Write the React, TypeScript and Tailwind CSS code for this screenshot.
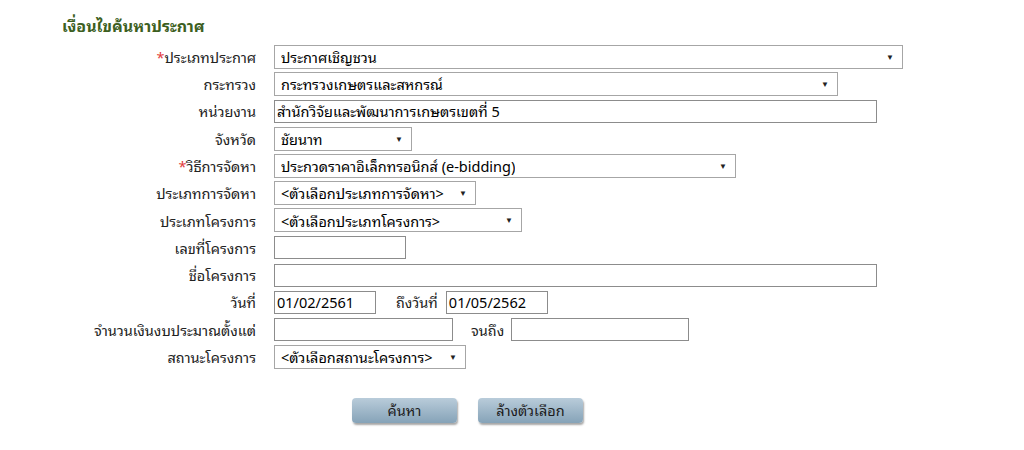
import React from 'react';

const font = {
  fontFamily: "Tahoma, 'Noto Sans Thai Looped', Loma, Garuda, 'Noto Sans Thai', 'Noto Sans', sans-serif",
};

function Select({ value, width }: { value: string; width: string }) {
  return (
    <div
      className={`${width} h-[24px] flex items-center justify-between border border-[#a6a6a6] bg-white pl-[6px] pr-[8px] text-[14.5px] text-black`}
    >
      <span className="truncate">{value}</span>
      <span className="text-[8px] leading-none text-[#222]">▼</span>
    </div>
  );
}

function TextBox({ value = '', width }: { value?: string; width: string }) {
  return (
    <div
      className={`${width} h-[23px] flex items-center border border-[#8c8c8c] bg-white px-[2px] text-[14.5px] text-black`}
    >
      {value}
    </div>
  );
}

function Label({ text, required }: { text: string; required?: boolean }) {
  return (
    <div className="text-right text-[14.5px] text-[#222] whitespace-nowrap">
      {required && <span className="text-[#e23b3b]">*</span>}
      {text}
    </div>
  );
}

export default function App() {
  const rows: { label: string; required?: boolean; field: React.ReactNode }[] = [
    { label: 'ประเภทประกาศ', required: true, field: <Select value="ประกาศเชิญชวน" width="w-[629px]" /> },
    { label: 'กระทรวง', field: <Select value="กระทรวงเกษตรและสหกรณ์" width="w-[564px]" /> },
    { label: 'หน่วยงาน', field: <TextBox value="สำนักวิจัยและพัฒนาการเกษตรเขตที่ 5" width="w-[603px]" /> },
    { label: 'จังหวัด', field: <Select value="ชัยนาท" width="w-[138px]" /> },
    { label: 'วิธีการจัดหา', required: true, field: <Select value="ประกวดราคาอิเล็กทรอนิกส์ (e-bidding)" width="w-[462px]" /> },
    { label: 'ประเภทการจัดหา', field: <Select value="<ตัวเลือกประเภทการจัดหา>" width="w-[202px]" /> },
    { label: 'ประเภทโครงการ', field: <Select value="<ตัวเลือกประเภทโครงการ>" width="w-[248px]" /> },
    { label: 'เลขที่โครงการ', field: <TextBox width="w-[132px]" /> },
    { label: 'ชื่อโครงการ', field: <TextBox width="w-[603px]" /> },
    {
      label: 'วันที่',
      field: (
        <div className="flex items-center">
          <TextBox value="01/02/2561" width="w-[102px]" />
          <span className="ml-[20px] mr-[8px] text-[14.5px] text-[#222]">ถึงวันที่</span>
          <TextBox value="01/05/2562" width="w-[102px]" />
        </div>
      ),
    },
    {
      label: 'จำนวนเงินงบประมาณตั้งแต่',
      field: (
        <div className="flex items-center">
          <TextBox width="w-[179px]" />
          <span className="ml-[18px] mr-[7px] text-[14.5px] text-[#222]">จนถึง</span>
          <TextBox width="w-[178px]" />
        </div>
      ),
    },
    { label: 'สถานะโครงการ', field: <Select value="<ตัวเลือกสถานะโครงการ>" width="w-[192px]" /> },
  ];

  return (
    <div className="w-[1024px] h-[450px] bg-white" style={font}>
      <div className="pl-[62px] pt-[13px] text-[16px] font-bold text-[#3d5f1f]">เงื่อนไขค้นหาประกาศ</div>
      <div className="mt-[6px] grid grid-cols-[256px_1fr] gap-x-[18px]">
        {rows.map((r) => (
          <React.Fragment key={r.label}>
            <div className="h-[27.3px] flex items-center justify-end">
              <Label text={r.label} required={r.required} />
            </div>
            <div className="h-[27.3px] flex items-center">{r.field}</div>
          </React.Fragment>
        ))}
      </div>
      <div className="mt-[27px] ml-[352px] flex gap-[21px]">
        {['ค้นหา', 'ล้างตัวเลือก'].map((t) => (
          <button
            key={t}
            className="w-[105px] h-[25px] rounded-[4px] bg-gradient-to-b from-[#b9ccda] to-[#86a3b8] text-[14.5px] text-[#1c1c1c] shadow-[1px_2px_2px_rgba(0,0,0,0.35)]"
          >
            {t}
          </button>
        ))}
      </div>
    </div>
  );
}
